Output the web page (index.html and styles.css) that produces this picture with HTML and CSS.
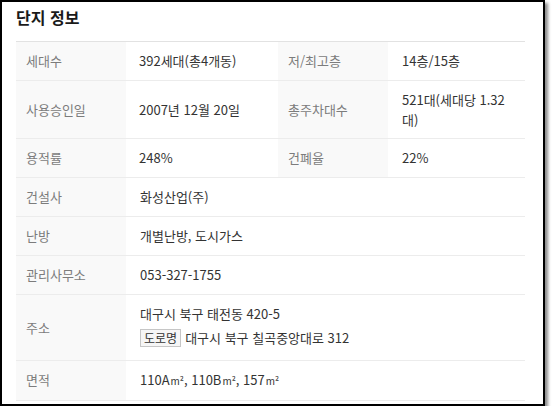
FILE: index.html
```html
<!DOCTYPE html>
<html lang="ko">
<head>
<meta charset="utf-8">
<title>단지 정보</title>
<link rel="stylesheet" href="styles.css">
</head>
<body>
<div class="window">
  <div class="content">
    <h2 class="title">단지 정보</h2>
    <div class="table">
      <div class="row">
        <div class="label">세대수</div>
        <div class="value"><div>392세대(총4개동)</div></div>
        <div class="label">저/최고층</div>
        <div class="value"><div>14층/15층</div></div>
      </div>
      <div class="row">
        <div class="label">사용승인일</div>
        <div class="value"><div>2007년 12월 20일</div></div>
        <div class="label">총주차대수</div>
        <div class="value"><div>521대(세대당 1.32 대)</div></div>
      </div>
      <div class="row">
        <div class="label">용적률</div>
        <div class="value"><div>248%</div></div>
        <div class="label">건폐율</div>
        <div class="value"><div>22%</div></div>
      </div>
      <div class="row">
        <div class="label">건설사</div>
        <div class="value wide"><div>화성산업(주)</div></div>
      </div>
      <div class="row">
        <div class="label">난방</div>
        <div class="value wide"><div>개별난방, 도시가스</div></div>
      </div>
      <div class="row">
        <div class="label">관리사무소</div>
        <div class="value wide"><div>053-327-1755</div></div>
      </div>
      <div class="row">
        <div class="label">주소</div>
        <div class="value wide">
          <div class="addr">대구시 북구 태전동 420-5</div>
          <div class="addr road"><span class="badge">도로명</span>대구시 북구 칠곡중앙대로 312</div>
        </div>
      </div>
      <div class="row">
        <div class="label">면적</div>
        <div class="value wide"><div>110A<span class="unit">m²</span>, 110B<span class="unit">m²</span>, 157<span class="unit">m²</span></div></div>
      </div>
    </div>
  </div>
</div>
</body>
</html>
```

FILE: styles.css
```css
html, body {
  margin: 0;
  padding: 0;
  background: #ffffff;
}

body {
  font-family: "Noto Sans CJK KR", "Noto Sans", sans-serif;
  color: #333333;
}

.window {
  width: 545px;
  height: 406px;
  box-sizing: border-box;
  border: 2px solid #000000;
  background: #ffffff;
  box-shadow: 3px 3px 3px rgba(0, 0, 0, 0.45);
  overflow: hidden;
}

.content {
  padding: 5px 0 0 14px;
}

.title {
  margin: 0 0 14px 0;
  font-size: 16px;
  line-height: 20px;
  font-weight: 700;
  color: #1a1a1a;
}

.table {
  width: 509px;
  border-top: 1px solid #e2e2e2;
}

.row {
  display: grid;
  grid-template-columns: 110px 152px 110px 137px;
  border-bottom: 1px solid #ececec;
}

.label {
  background: #f9f9f9;
  color: #7c7c7c;
  font-size: 13px;
  line-height: 20px;
  padding: 9px 10px;
  display: flex;
  align-items: center;
}

.value {
  font-size: 13px;
  line-height: 19.5px;
  padding: 9px 8px 9px 13px;
  display: flex;
  flex-direction: column;
  justify-content: center;
  color: #333333;
}

.row .value:last-child {
  padding-left: 14px;
}

.value.wide {
  grid-column: 2 / 5;
}

.addr {
  line-height: 20px;
}

.addr.road {
  height: 26px;
  display: flex;
  align-items: center;
  margin-top: 1px;
}

.badge {
  display: inline-block;
  box-sizing: border-box;
  height: 18px;
  line-height: 16px;
  padding: 0 3px;
  margin-right: 4px;
  border: 1px solid #c6c6c6;
  background: #f6f6f6;
  font-size: 12px;
  color: #333333;
}

.unit {
  font-size: 10px;
  margin-left: 1px;
}
```
